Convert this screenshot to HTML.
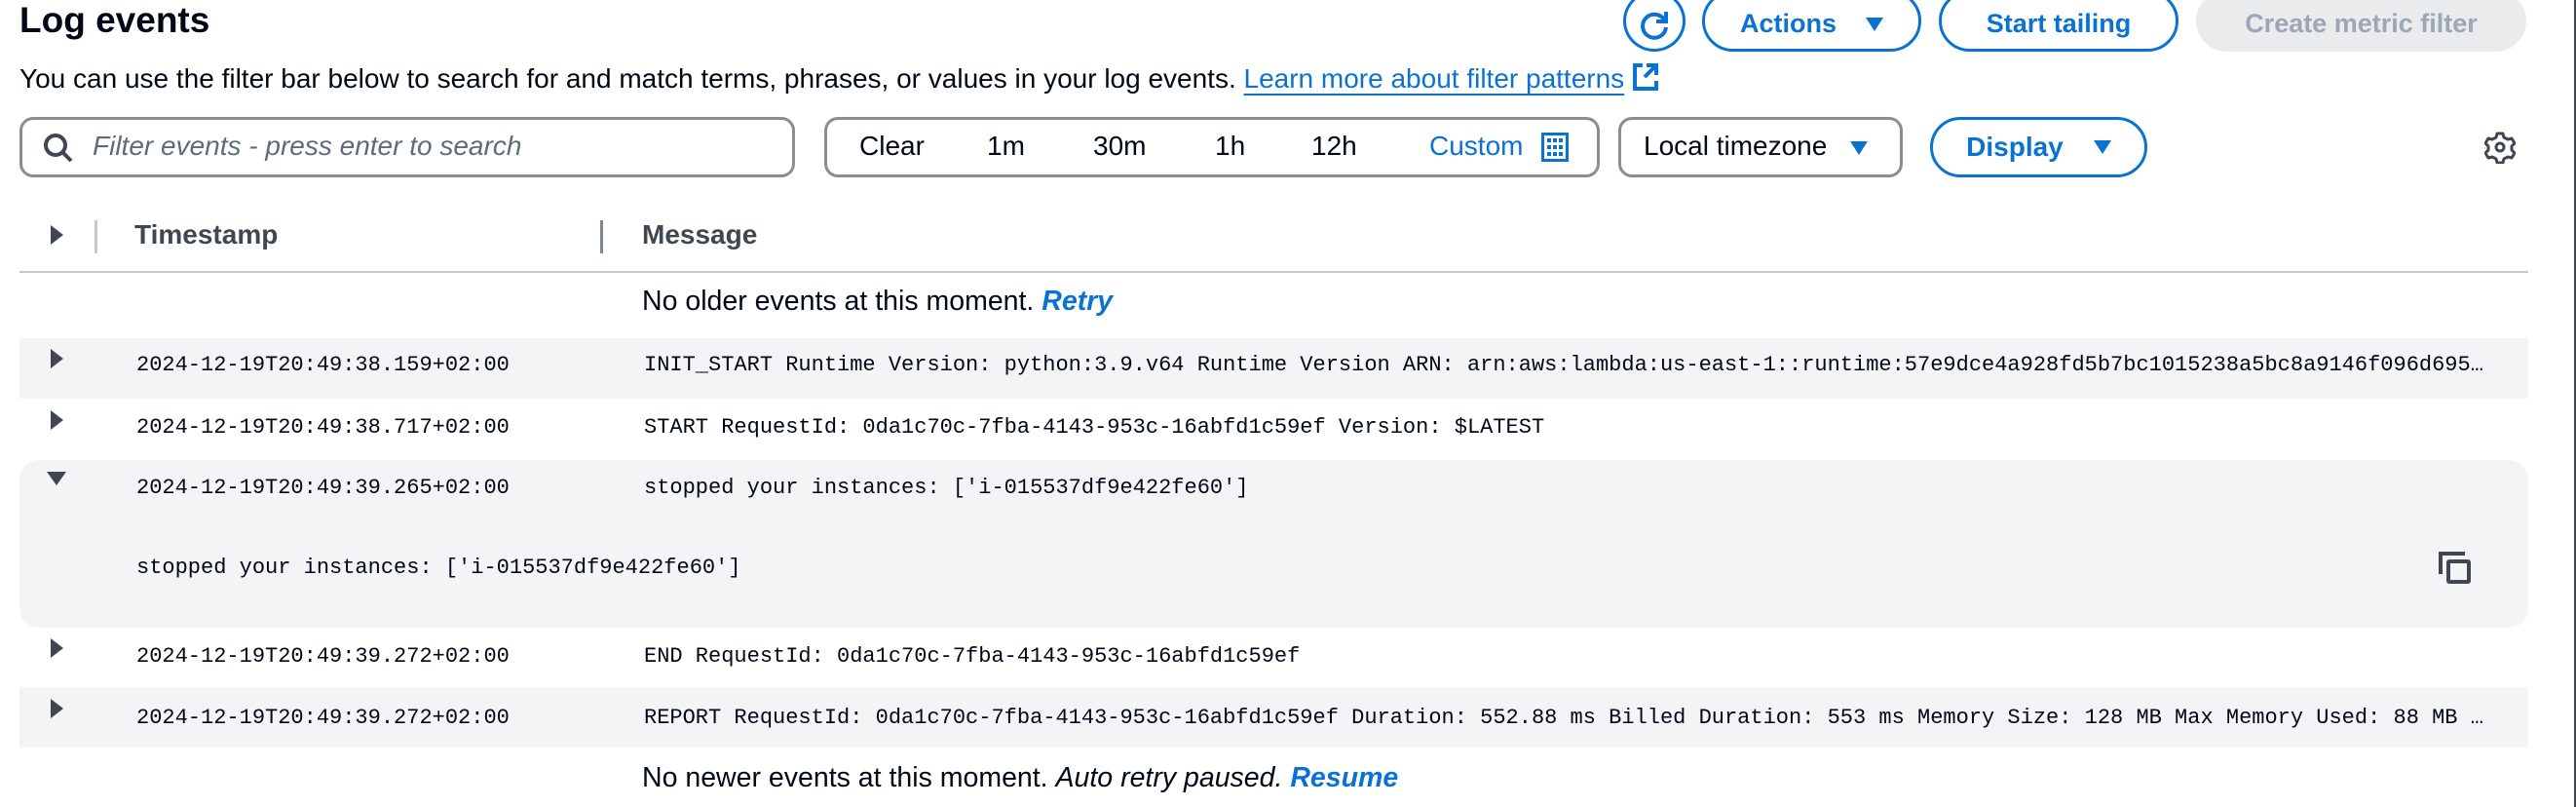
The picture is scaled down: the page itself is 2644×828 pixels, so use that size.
<!DOCTYPE html>
<html><head><meta charset="utf-8"><style>
*{box-sizing:border-box;margin:0;padding:0}
body{width:2644px;height:828px;overflow:hidden;background:#fff;font-family:"Liberation Sans",sans-serif;color:#000716;position:relative}
.a{position:absolute;white-space:nowrap}
.btn{position:absolute;border:3px solid #0972d3;border-radius:34px;color:#0972d3;font-weight:bold;font-size:27px;display:flex;align-items:center;justify-content:center}
.box{position:absolute;border:3px solid #8c8c94;border-radius:14px}
.mono{font-family:"Liberation Mono",monospace;font-size:22px;color:#000716}
.tri{display:inline-block;width:0;height:0;border-left:9px solid transparent;border-right:9px solid transparent;border-top:14px solid #0972d3}
.rt{position:absolute;width:0;height:0;border-top:10px solid transparent;border-bottom:10px solid transparent;border-left:13px solid #414750}
.gray{position:absolute;left:20px;width:2575px;background:#f4f4f6}
.t{font-size:28px}
</style></head><body>
<div class="a" style="left:20px;top:0px;font-size:37px;font-weight:bold">Log events</div>
<div class="a" style="left:20px;top:64px;font-size:28px">You can use the filter bar below to search for and match terms, phrases, or values in your log events. <span style="color:#0972d3;text-decoration:underline;text-underline-offset:6px">Learn more about filter patterns</span> <svg style="vertical-align:-4px" width="28" height="30" viewBox="0 0 28 30"><path d="M11 3H3v24h22v-8" fill="none" stroke="#0972d3" stroke-width="4"/><path d="M15 3h10v10M25 3L13 15" fill="none" stroke="#0972d3" stroke-width="4"/></svg></div>

<div class="btn" style="left:1666px;top:-10px;width:64px;height:63px;border-radius:50%;padding-top:8px"><svg width="36" height="36" viewBox="0 0 36 36"><path d="M28 12A12 12 0 1 0 30 20" fill="none" stroke="#0972d3" stroke-width="4"/><path d="M30 4v10H20" fill="none" stroke="#0972d3" stroke-width="4"/></svg></div>
<div class="btn" style="left:1747px;top:-10px;width:225px;height:63px;padding-top:6px">Actions&nbsp;&nbsp;&nbsp;&nbsp;<span class="tri"></span></div>
<div class="btn" style="left:1990px;top:-10px;width:246px;height:63px;padding-top:6px">Start tailing</div>
<div class="btn" style="left:2254px;top:-10px;width:339px;height:63px;padding-top:6px;border:none;background:#e9ebed;color:#9ba7b6">Create metric filter</div>

<div class="box" style="left:20px;top:120px;width:796px;height:62px"></div>
<svg class="a" style="left:44px;top:136px" width="32" height="32" viewBox="0 0 32 32"><circle cx="13" cy="13" r="10" fill="none" stroke="#414750" stroke-width="4"/><path d="M20 20l9 9" stroke="#414750" stroke-width="4"/></svg>
<div class="a t" style="left:95px;top:134px;font-style:italic;color:#5f6b7a">Filter events - press enter to search</div>

<div class="box" style="left:846px;top:120px;width:796px;height:62px"></div>
<div class="a t" style="left:882px;top:134px">Clear</div>
<div class="a t" style="left:1013px;top:134px">1m</div>
<div class="a t" style="left:1122px;top:134px">30m</div>
<div class="a t" style="left:1247px;top:134px">1h</div>
<div class="a t" style="left:1346px;top:134px">12h</div>
<div class="a t" style="left:1467px;top:134px;color:#0972d3">Custom</div>
<svg class="a" style="left:1582px;top:136px" width="28" height="30" viewBox="0 0 28 30"><rect x="1.5" y="1.5" width="25" height="27" fill="none" stroke="#0972d3" stroke-width="3"/><g fill="#0972d3"><rect x="6" y="6" width="4" height="4"/><rect x="12" y="6" width="4" height="4"/><rect x="18" y="6" width="4" height="4"/><rect x="6" y="13" width="4" height="4"/><rect x="12" y="13" width="4" height="4"/><rect x="18" y="13" width="4" height="4"/><rect x="6" y="20" width="4" height="4"/><rect x="12" y="20" width="4" height="4"/><rect x="18" y="20" width="4" height="4"/></g></svg>

<div class="box" style="left:1661px;top:120px;width:292px;height:62px"></div>
<div class="a t" style="left:1687px;top:134px">Local timezone&nbsp;&nbsp;&nbsp;<span class="tri"></span></div>
<div class="btn" style="left:1981px;top:120px;width:223px;height:62px;font-size:28px">Display&nbsp;&nbsp;&nbsp;&nbsp;<span class="tri"></span></div>
<svg class="a" style="left:2550px;top:134px" width="32" height="34" viewBox="0 0 32 34"><path d="M13 3h6l1 4 4 2 4-1 3 5-3 3v4l3 3-3 5-4-1-4 2-1 4h-6l-1-4-4-2-4 1-3-5 3-3v-4L1 13l3-5 4 1 4-2z" fill="none" stroke="#414750" stroke-width="3" stroke-linejoin="round"/><circle cx="16" cy="17" r="4" fill="none" stroke="#414750" stroke-width="3"/></svg>

<div class="rt" style="left:52px;top:231px"></div>
<div class="a" style="left:97px;top:226px;width:3px;height:34px;background:#c6c6cd"></div>
<div class="a t" style="left:138px;top:225px;font-weight:bold;color:#414750">Timestamp</div>
<div class="a" style="left:616px;top:226px;width:3px;height:34px;background:#7d8998"></div>
<div class="a t" style="left:659px;top:225px;font-weight:bold;color:#414750">Message</div>
<div class="a" style="left:20px;top:278px;width:2575px;height:2px;background:#c6c6cd"></div>

<div class="a" style="left:659px;top:293px;font-size:28.5px">No older events at this moment. <i style="color:#0972d3;font-weight:bold">Retry</i></div>

<div class="gray" style="top:347px;height:62px"></div>
<div class="rt" style="left:52px;top:358px"></div>
<div class="a mono" style="left:140px;top:362px">2024-12-19T20:49:38.159+02:00</div>
<div class="a mono" style="left:661px;top:362px;width:1890px;overflow:hidden;text-overflow:ellipsis">INIT_START Runtime Version: python:3.9.v64 Runtime Version ARN: arn:aws:lambda:us-east-1::runtime:57e9dce4a928fd5b7bc1015238a5bc8a9146f096d695a8f4c1e9a1b6e5f0c3d2</div>

<div class="rt" style="left:52px;top:421px"></div>
<div class="a mono" style="left:140px;top:426px">2024-12-19T20:49:38.717+02:00</div>
<div class="a mono" style="left:661px;top:426px">START RequestId: 0da1c70c-7fba-4143-953c-16abfd1c59ef Version: $LATEST</div>

<div class="gray" style="top:472px;height:172px;border-radius:20px"></div>
<div class="a" style="left:48px;top:484px;width:0;height:0;border-left:10px solid transparent;border-right:10px solid transparent;border-top:14px solid #414750"></div>
<div class="a mono" style="left:140px;top:488px">2024-12-19T20:49:39.265+02:00</div>
<div class="a mono" style="left:661px;top:488px">stopped your instances: ['i-015537df9e422fe60']</div>
<div class="a mono" style="left:140px;top:570px">stopped your instances: ['i-015537df9e422fe60']</div>
<svg class="a" style="left:2503px;top:566px" width="33" height="33" viewBox="0 0 33 33"><path d="M2 23V2h25" fill="none" stroke="#414750" stroke-width="4"/><rect x="10" y="10" width="21" height="21" rx="1" fill="none" stroke="#414750" stroke-width="4"/></svg>

<div class="rt" style="left:52px;top:655px"></div>
<div class="a mono" style="left:140px;top:661px">2024-12-19T20:49:39.272+02:00</div>
<div class="a mono" style="left:661px;top:661px">END RequestId: 0da1c70c-7fba-4143-953c-16abfd1c59ef</div>

<div class="gray" style="top:705px;height:62px"></div>
<div class="rt" style="left:52px;top:717px"></div>
<div class="a mono" style="left:140px;top:724px">2024-12-19T20:49:39.272+02:00</div>
<div class="a mono" style="left:661px;top:724px;width:1890px;overflow:hidden;text-overflow:ellipsis">REPORT RequestId: 0da1c70c-7fba-4143-953c-16abfd1c59ef Duration: 552.88 ms Billed Duration: 553 ms Memory Size: 128 MB Max Memory Used: 88 MB Init Duration: 400.12 ms</div>

<div class="a" style="left:659px;top:782px;font-size:28.5px">No newer events at this moment. <i>Auto retry paused.</i> <i style="color:#0972d3;font-weight:bold">Resume</i></div>
<div class="a" style="left:2642px;top:0;width:2px;height:828px;background:#414750"></div>
</body></html>
